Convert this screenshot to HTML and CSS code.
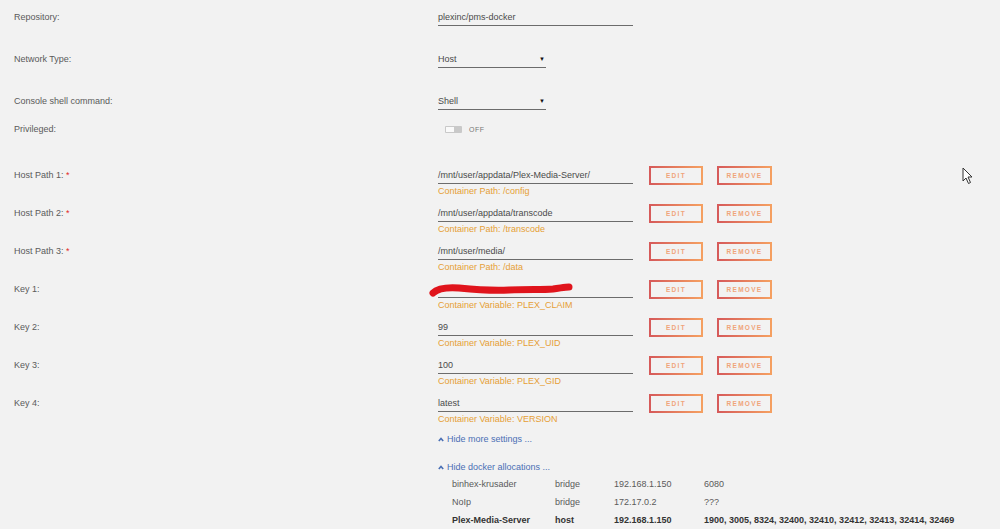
FILE: index.html
```html
<!DOCTYPE html>
<html lang="en">
<head>
  <meta charset="UTF-8">
  <title>Update Container</title>
  <link rel="stylesheet" href="styles.css">
</head>
<body>
  <div class="form">
    <!-- basic settings -->
    <div class="row tall">
      <div class="label">Repository:</div>
      <div class="field wide">plexinc/pms-docker</div>
    </div>
    <div class="row tall">
      <div class="label">Network Type:</div>
      <div class="field select">Host<span class="caret">&#9660;</span></div>
    </div>
    <div class="row short">
      <div class="label">Console shell command:</div>
      <div class="field select">Shell<span class="caret">&#9660;</span></div>
    </div>
    <div class="row priv">
      <div class="label">Privileged:</div>
      <div class="switch-wrap"><span class="switch"><span class="knob"></span></span><span class="off">OFF</span></div>
    </div>

    <!-- paths and variables -->
    <div class="row item">
      <div class="label">Host Path 1: <span class="req">*</span></div>
      <div><div class="field wide">/mnt/user/appdata/Plex-Media-Server/</div><div class="hint">Container Path: /config</div></div>
      <div class="actions"><button class="btn">EDIT</button><button class="btn">REMOVE</button></div>
    </div>
    <div class="row item">
      <div class="label">Host Path 2: <span class="req">*</span></div>
      <div><div class="field wide">/mnt/user/appdata/transcode</div><div class="hint">Container Path: /transcode</div></div>
      <div class="actions"><button class="btn">EDIT</button><button class="btn">REMOVE</button></div>
    </div>
    <div class="row item">
      <div class="label">Host Path 3: <span class="req">*</span></div>
      <div><div class="field wide">/mnt/user/media/</div><div class="hint">Container Path: /data</div></div>
      <div class="actions"><button class="btn">EDIT</button><button class="btn">REMOVE</button></div>
    </div>
    <div class="row item">
      <div class="label">Key 1:</div>
      <div class="redacted-wrap">
        <div class="field wide"></div>
        <div class="hint">Container Variable: PLEX_CLAIM</div>
        <svg class="scribble" width="150" height="16" viewBox="0 0 150 16">
          <path d="M4 11 C8 7 16 5 30 6 C50 8 62 9 80 8 C100 7 112 8 124 7 C132 6 136 5 140 5" fill="none" stroke="#e0141c" stroke-width="7" stroke-linecap="round"/>
        </svg>
      </div>
      <div class="actions"><button class="btn">EDIT</button><button class="btn">REMOVE</button></div>
    </div>
    <div class="row item">
      <div class="label">Key 2:</div>
      <div><div class="field wide">99</div><div class="hint">Container Variable: PLEX_UID</div></div>
      <div class="actions"><button class="btn">EDIT</button><button class="btn">REMOVE</button></div>
    </div>
    <div class="row item">
      <div class="label">Key 3:</div>
      <div><div class="field wide">100</div><div class="hint">Container Variable: PLEX_GID</div></div>
      <div class="actions"><button class="btn">EDIT</button><button class="btn">REMOVE</button></div>
    </div>
    <div class="row item">
      <div class="label">Key 4:</div>
      <div><div class="field wide">latest</div><div class="hint">Container Variable: VERSION</div></div>
      <div class="actions"><button class="btn">EDIT</button><button class="btn">REMOVE</button></div>
    </div>

    <!-- toggles and allocations -->
    <div class="extra">
      <div class="toggle">
        <svg class="chev" width="6" height="5" viewBox="0 0 6 5"><polyline points="0.8,4 3,1.5 5.2,4" fill="none" stroke="#4a6fb5" stroke-width="1.6"/></svg>Hide more settings ...
      </div>
      <div class="toggle second">
        <svg class="chev" width="6" height="5" viewBox="0 0 6 5"><polyline points="0.8,4 3,1.5 5.2,4" fill="none" stroke="#4a6fb5" stroke-width="1.6"/></svg>Hide docker allocations ...
      </div>
      <table class="alloc">
        <tr><td>binhex-krusader</td><td>bridge</td><td>192.168.1.150</td><td>6080</td></tr>
        <tr><td>NoIp</td><td>bridge</td><td>172.17.0.2</td><td>???</td></tr>
        <tr class="me"><td>Plex-Media-Server</td><td>host</td><td>192.168.1.150</td><td>1900, 3005, 8324, 32400, 32410, 32412, 32413, 32414, 32469</td></tr>
      </table>
    </div>
  </div>

  <svg class="cursor" width="12" height="18" viewBox="0 0 12 18">
    <path d="M1 1 L1 14 L4 11 L6.5 16.5 L8.5 15.5 L6 10 L10 10 Z" fill="#fff" stroke="#333" stroke-width="1"/>
  </svg>
</body>
</html>
```

FILE: styles.css
```css
body {
  margin: 0;
  background-color: #f2f2f2;
  font-family: "Liberation Sans", Arial, sans-serif;
  font-size: 9px;
  color: #555;
  min-height: 529px;
  position: relative;
}
.form {
  padding: 9px 0 0 14px;
}
.row {
  display: grid;
  grid-template-columns: 424px 195px auto;
  align-items: start;
}
.row.tall {
  height: 42px;
}
.row.short {
  height: 28px;
}
.row.priv {
  height: 46px;
}
.row.item {
  height: 38px;
}
.label {
  line-height: 16px;
  color: #5a5a5a;
}
.req {
  color: #e22828;
}
.field {
  height: 16px;
  line-height: 16px;
  border-bottom: 1px solid #6c6c6c;
  color: #4a4a4a;
}
.field.wide {
  width: 195px;
}
.field.select {
  width: 108px;
  position: relative;
}
.caret {
  position: absolute;
  right: 1px;
  top: 0;
  font-size: 6px;
  color: #111;
}
.hint {
  line-height: 14px;
  color: #e69f35;
}
.switch-wrap {
  display: flex;
  align-items: center;
  height: 16px;
  padding-left: 7px;
}
.switch {
  display: inline-block;
  width: 17px;
  height: 7px;
  background-color: #c9c9c9;
  border-radius: 1px;
}
.knob {
  display: block;
  width: 8px;
  height: 5px;
  margin: 1px;
  background-color: #fafafa;
}
.off {
  margin-left: 7px;
  font-size: 7px;
  letter-spacing: 0.5px;
  color: #777;
}
.actions {
  display: flex;
  gap: 14px;
  margin-left: 16px;
  margin-top: -1px;
}
.btn {
  width: 54px;
  height: 19px;
  padding: 0;
  background: transparent;
  border: 2px solid;
  border-image: linear-gradient(90deg, #d65a5a, #f5a061) 1;
  font-family: "Liberation Sans", Arial, sans-serif;
  font-size: 6.5px;
  font-weight: bold;
  letter-spacing: 1.3px;
  color: #f0a47a;
}
.btn + .btn {
  width: 55px;
}
.redacted-wrap {
  position: relative;
}
.scribble {
  position: absolute;
  left: -9px;
  top: 1px;
}
.extra {
  margin-left: 424px;
}
.toggle {
  line-height: 12px;
  color: #4a6fb5;
}
.toggle.second {
  margin-top: 16px;
}
.chev {
  margin-right: 3px;
  vertical-align: 0;
}
.alloc {
  margin: 2px 0 0 14px;
  border-collapse: collapse;
  color: #5a5a5a;
}
.alloc td {
  height: 18px;
  padding: 0;
}
.alloc td:nth-child(1) {
  width: 103px;
}
.alloc td:nth-child(2) {
  width: 59px;
}
.alloc td:nth-child(3) {
  width: 90px;
}
.alloc .me td {
  font-weight: bold;
  color: #333;
}
.cursor {
  position: absolute;
  left: 962px;
  top: 167px;
}
```
